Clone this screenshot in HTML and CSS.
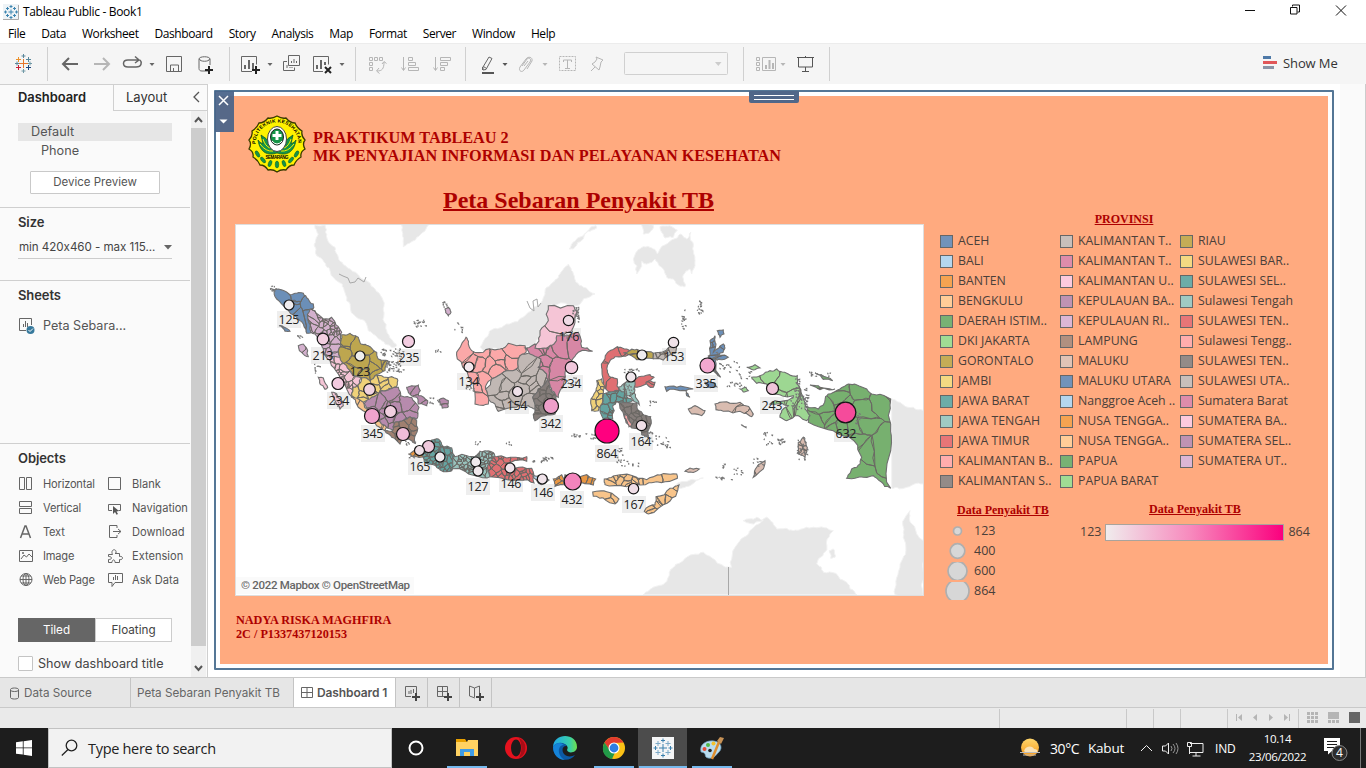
FILE: index.html
```html
<!DOCTYPE html>
<html lang="id">
<head>
<meta charset="utf-8">
<title>Tableau Public - Book1</title>
<link rel="stylesheet" href="styles.css">
</head>
<body>
<div class="app">
  <header class="titlebar">
    <svg class="app-icon" width="16" height="16" viewBox="0 0 16 16"><path fill="#eef3f6" d="M0 0h16v16H0z"/><path d="M15.500 1v14.500H0" fill="none" stroke="#aaa"/><path d="M8 5.500v5M5.500 8h5M8 1v3M6.500 2.500h3M8 12v3M6.500 13.500h3M1 8h3M2.500 6.500v3M12 8h3M13.500 6.500v3M4.500 3v3M3 4.500h3M11.500 3v3M10 4.500h3M4.500 10v3M3 11.500h3M11.500 10v3M10 11.500h3" stroke="#3d85b0" fill="none"/></svg>
    <span class="window-title">Tableau Public - Book1</span>
    <svg class="window-controls" width="124" height="23" viewBox="1242 0 124 23"><path d="M1245 10.500h10M1336 5.500l10 10m0-10l-10 10M1292.500 6.500v-1.500h7v7h-2M1290.500 7.500h6.500v6.500h-6.500z" fill="none" stroke="#111"/></svg>
  </header>
  <nav class="menubar"><span>File</span><span>Data</span><span>Worksheet</span><span>Dashboard</span><span>Story</span><span>Analysis</span><span>Map</span><span>Format</span><span>Server</span><span>Window</span><span>Help</span></nav>
  <div class="toolbar">
    <svg width="47" height="41" viewBox="0 43 47 41" class="stroke"><path stroke="#e8762c" d="M23.500 59v9M19 63.500h9"/><path stroke="#5b879b" d="M23.500 54v4M21.500 56h4M15 63.500h4M17 61.500v4"/><path stroke="#eb912c" d="M18.500 57v5M16 59.500h5"/><path stroke="#59879b" d="M28.500 57v5M26 59.500h5"/><path stroke="#c72035" d="M18.500 65v5M16 67.500h5"/><path stroke="#1f457e" d="M28.500 65v5M26 67.500h5"/><path stroke="#7199a6" d="M23.500 69v4M21.500 71h4"/><path stroke="#7099a6" d="M28 63.500h4M30 61.500v4"/></svg>
    <svg width="182" height="41" viewBox="47 43 182 41" class="stroke sep"><path stroke-width="2" d="M78 64H63m6-6l-6 6 6 6"/><path stroke="#b6b6b6" stroke-width="2" d="M94 64h15m-6-6l6 6-6 6"/><path stroke-width="1.500" d="M138 60h-10c-6 0-6 7 0 7h8c6 0 6-5 4-7M135 56.500l4 3.500-4 3"/><path class="solid" d="M149.500 63h5l-2.500 3z"/><path d="M166.500 56.500h15v15h-15zM170.500 71v-6h8v6M173.500 71v-3"/><path d="M208 71h-6c-3 0-3-2-3-3V59c0-3 11-3 11 0v6M199.500 59c0 3 10 3 10 0"/><path stroke="#222" stroke-width="2" d="M209 66v8M205 70h8"/></svg>
    <svg width="126" height="41" viewBox="229 43 126 41" class="stroke sep"><path d="M252 71.500H241.500v-15h15v8"/><path stroke-width="2" d="M245 69v-4M249 69v-9M253 69v-6"/><path stroke="#222" stroke-width="2" d="M256 66v8M252 70h8"/><path class="solid" d="M267.500 63h5l-2.500 3z"/><path d="M288.500 55.500h11v10h-11zM287 61.500h-3.500v9h11v-3M291.500 63v-2M294 63v-4M296.500 63v-2M287 68v-3M290 68v-1M292 68v-1"/><path d="M323 71.500H313.500v-15h15v8"/><path stroke-width="2" d="M317 69v-4M321 69v-9M325 65v-3"/><path stroke="#222" stroke-width="2" d="M325 67l6 6m0-6l-6 6"/><path class="solid" d="M339.500 63h5l-2.500 3z"/></svg>
    <svg width="110" height="41" viewBox="355 43 110 41" class="stroke sep dim"><path d="M369.500 57.500h3v3h-3zM374.500 57.500h3v3h-3zM379.500 57.500h3v3h-3zM369.500 62.500h3v3h-3zM369.500 67.500h3v3h-3zM377 71c5 0 7-2 7-9M379 68l-2.500 3 3 2.500M382 64l2-2.500 2.500 2"/><path d="M403.500 57v13M401.500 67.500l2 3 2-3M408.500 57.500h4v3h-4zM408.500 62.500h7v3h-7zM408.500 67.500h10v3h-10zM435.500 57v13M433.500 67.500l2 3 2-3M440.500 57.500h10v3h-10zM440.500 62.500h7v3h-7zM440.500 67.500h4v3h-4z"/></svg>
    <svg width="278" height="41" viewBox="465 43 278 41" class="stroke sep dim"><path stroke="#666" d="M489 57l3 1.500-6 11-3 .5v-3zM483.500 66.500l3 2M482.500 67v3"/><path stroke="#555" stroke-width="2" d="M482 73h12"/><path class="solid dark" d="M502.500 63h5l-2.500 3z"/><path d="M522 66l5-7c2-2 5 0 3 3l-6 8c-2 3-6 1-4-3l6-8c2-3 7-2 6 2l-5 8M524 66l4-5"/><path class="solid" d="M542.500 63h5l-2.500 3z"/><path stroke-dasharray="2 1" d="M559.500 56.500h16v14h-16z"/><path d="M563.500 62v-2h8v2M567.500 60v8M565 68.500h5"/><path d="M596 57l7 3-2 2-1 5-1 3-7-6 3-2 2-3zM595 67l-4 4"/><rect x="624.500" y="52.500" width="103" height="22" rx="1" stroke="#d0d0d0"/><path fill="#ccc" stroke="none" d="M715 62h6.500l-3.200 4z"/></svg>
    <svg width="87" height="41" viewBox="743 43 87 41" class="stroke sep dim endsep"><path d="M756.500 57.500h3v3h-3zM756.500 62.500h3v3h-3zM756.500 67.500h3v3h-3zM762.500 57.500h13v13h-13z"/><path stroke-width="2" d="M766 69v-4M769.500 69v-9M773 69v-6"/><path class="solid" d="M780.500 63h5l-2.500 3z"/><path stroke="#555" d="M797 57.500h17M798.500 57v10h14V57M805.500 67v4M802 71.500h7M805.500 56v1.500"/></svg>
    <div class="show-me"><svg width="16" height="16"><path fill="#4e79a7" d="M1 1h8v3H1z"/><path fill="#e15759" d="M1 6h14v3H1z"/><path fill="#8a94a6" d="M1 11h11v3H1z"/></svg>Show Me</div>
  </div>

  <main class="workspace">
    <aside class="sidebar">
      <div class="side-tabs"><b>Dashboard</b><span>Layout</span><svg width="18" height="26"><path d="M10 7L5 12l5 5" class="chev"/></svg></div>
      <div class="side-scroll">
        <div class="side-content">
          <section class="devices"><div class="device active">Default</div><div class="device phone">Phone</div><div class="preview">Device Preview</div></section>
          <section class="size"><h3>Size</h3><div class="select"><span>min 420x460 - max 115...</span><svg width="8" height="5"><path d="M0 0h8L4 4.500z" fill="#666"/></svg></div></section>
          <section class="sheets"><h3>Sheets</h3><div class="sheet"><svg width="17" height="17"><path d="M8 13.500H1.500v-12h12V8M5.500 10V7M7.500 10V4M9.500 10V6" class="ico"/><circle cx="12.500" cy="13" r="4" fill="#36799c"/><path d="M10.500 13l1.500 1.500 3-3" stroke="#fff" fill="none"/></svg>Peta Sebara...</div></section>
          <section class="objects"><h3>Objects</h3>
            <div class="object-grid">
              <span><svg width="16" height="16"><path class="ico" d="M1.500 1.500h5v12h-5zM8.500 1.500h5v12h-5z"/></svg>Horizontal</span><span><svg width="16" height="16"><path class="ico" d="M1.500 1.500h12v12h-12z"/></svg>Blank</span>
              <span><svg width="16" height="16"><path class="ico" d="M1.500 1.500h12v5h-12zM1.500 8.500h12v5h-12z"/></svg>Vertical</span><span><svg width="16" height="16"><path class="ico" d="M5 10.500H1.500v-6h12v6h-2"/><path fill="#555" d="M6 6l6 5-2.500.5L11 14l-1.500.8L8 12l-2 2z"/></svg>Navigation</span>
              <span><svg width="16" height="16"><path fill="none" stroke="#666" stroke-width="1.500" d="M2.500 14L7 2h1l4.500 12M4.500 10h6"/></svg>Text</span><span><svg width="16" height="16"><path class="ico" d="M10 4V1.500H2.500v12H10V11M6 7.500h8M11 5l3 2.500-3 2.500"/></svg>Download</span>
              <span><svg width="16" height="16"><path class="ico" d="M1.500 2.500h13v11h-13zM3 11l3-4 2.500 2L11 6l3 3"/><circle cx="5" cy="5" r="1" fill="#666"/></svg>Image</span><span><svg width="16" height="16"><path class="ico" d="M1.500 6.500h4C3 1 10 0 9 5l-1 .5h4.500v3c4-1 4 4 0 3v3H8c0-4-3-3-3 0H1.500v-3c4 0 4-3 0-3z"/></svg>Extension</span>
              <span><svg width="16" height="16"><path class="ico" d="M2 7.500h12M3 4h10M3 11h10M8 1.500v12"/><circle class="ico" cx="8" cy="7.500" r="6"/><ellipse class="ico" cx="8" cy="7.500" rx="3" ry="6"/></svg>Web Page</span><span><svg width="16" height="16"><path class="ico" d="M1.500 1.500h14v9H8l-3 4v-4H1.500zM6.500 8V5M8.500 8V3M10.500 8V4"/></svg>Ask Data</span>
            </div>
            <div class="toggle"><span class="on">Tiled</span><span>Floating</span></div>
            <div class="check"><i></i>Show dashboard title</div>
          </section>
        </div>
        <div class="scrollbar"><svg width="15" height="15"><path d="M4 11l3.500-4L11 11" class="arrow"/></svg><div class="thumb"></div><svg width="15" height="22"><path d="M4 11l3.500 4 3.500-4" class="arrow"/></svg></div>
      </div>
    </aside>

    <div class="canvas">
      <div class="frame">
        <div class="frame-tools"><svg width="20" height="41"><path d="M4 5l9 9m0-9l-9 9" stroke="#fff" stroke-width="1.500"/><path d="M4.500 28.500h8l-4 4z" fill="#fff"/></svg></div>
        <div class="grip"></div>
        <div class="dashboard">
          <div class="head">
            <svg width="58" height="58" viewBox="-29 -29 58 58">
              <defs><path id="arcTop" d="M-21.500 0A21.500 21.500 0 0 1 21.500 0"/></defs>
              <path fill="#fff200" stroke="#3b3b00" stroke-width="1.300" d="M0-28Q5-25 9-26Q13-21 18-21Q20-16 25-13Q24-8 28-4Q25 0 28 5Q23 8 24 13Q19 16 17 21Q12 21 9 26Q4 25 0 28Q-4 25-9 26Q-12 21-17 21Q-19 16-24 13Q-23 8-28 5Q-25 0-28-4Q-24-8-25-13Q-20-16-18-21Q-13-21-9-26Q-5-25 0-28z"/>
              <text font-family="Liberation Sans" font-weight="bold" font-size="4.900" textLength="66"><textPath href="#arcTop">POLITEKNIK KESEHATAN</textPath></text>
              <path fill="#159447" stroke="#064d20" stroke-width=".7" d="M0 9C-9 12-17 9-19-4C-17-1-15-1-14 0L-16-9C-12-6-9-5-8-1L-7 4h14L8-1C9-5 12-6 16-9L14 0C15-1 17-1 19-4C17 9 9 12 0 9z"/>
              <path stroke="#fff200" stroke-width="1" fill="none" d="M-17 0Q-11 8-4 7M17 0Q11 8 4 7M-14-5Q-12 2-7 4M14-5Q12 2 7 4"/>
              <ellipse cy="-5" rx="9.500" ry="12.500" fill="#fff" stroke="#444"/><ellipse cy="-7" rx="6.500" ry="8" fill="#159447" stroke="#222"/><path fill="#fff" d="M-1.500-13h3v3h3v3h-3v3h-3v-3h-3v-3h3z"/><path d="M-5-3Q0 3 5-3" stroke="#fff" fill="none"/>
              <text font-family="Liberation Sans" font-weight="bold" font-size="4.500" text-anchor="middle" y="14.500" textLength="23">SEMARANG</text>
              <g fill="#159447" stroke="#064d20" stroke-width=".4"><ellipse cy="20.500" rx="1.800" ry="3.500"/><ellipse cx="-7" cy="19.500" rx="1.700" ry="3.300" transform="rotate(20 -7 19.500)"/><ellipse cx="7" cy="19.500" rx="1.700" ry="3.300" transform="rotate(-20 7 19.500)"/><ellipse cx="-14" cy="16" rx="1.700" ry="3.500" transform="rotate(-40 -14 16)"/><ellipse cx="14" cy="16" rx="1.700" ry="3.500" transform="rotate(40 14 16)"/><ellipse cx="-19.500" cy="10" rx="1.700" ry="3.500" transform="rotate(-30 -19.500 10)"/><ellipse cx="19.500" cy="10" rx="1.700" ry="3.500" transform="rotate(30 19.500 10)"/></g>
            </svg>
            <h1>PRAKTIKUM TABLEAU 2<br>MK PENYAJIAN INFORMASI DAN PELAYANAN KESEHATAN</h1>
          </div>
          <div class="body">
            <div class="map-card"><h2>Peta Sebaran Penyakit TB</h2><svg id="map" width="689" height="372" viewBox="235 224 689 372"></svg></div>
            <div class="legends">
              <h4 class="prov-title">PROVINSI</h4>
              <div class="prov" id="provinces"></div>
              <div class="data-legends">
                <div class="size-legend"><h4>Data Penyakit TB</h4>
                  <div><svg width="28" height="18"><circle cx="13.500" cy="9" r="4"/></svg>123</div><div><svg width="28" height="18"><circle cx="13.500" cy="9" r="7.300"/></svg>400</div><div><svg width="28" height="18"><circle cx="13.500" cy="9" r="9.500"/></svg>600</div><div><svg width="28" height="18"><circle cx="13.500" cy="9" r="11.500"/></svg>864</div>
                </div>
                <div class="color-legend"><h4>Data Penyakit TB</h4><div><span>123</span><i></i><span>864</span></div></div>
              </div>
            </div>
          </div>
          <div class="credit">NADYA RISKA MAGHFIRA<br>2C / P1337437120153</div>
        </div>
      </div>
    </div>
    <div class="gutter"></div>
  </main>

  <div class="tabs">
    <span class="tab source"><svg width="10" height="13"><path class="ico" d="M.5 2.500v8c0 2 8 2 8 0v-8c0-2-8-2-8 0zM.5 3c0 2 8 2 8 0"/></svg>Data Source</span>
    <span class="tab sheet-tab">Peta Sebaran Penyakit TB</span>
    <span class="tab current"><svg width="12" height="12"><path class="ico" d="M.5.5h11v10H.5zM6 .5v10M.5 5.500h11"/></svg>Dashboard 1</span>
    <span class="tab add"><svg width="17" height="16"><path class="ico" d="M7 11.500H1.500v-10h11V8M5 9V6M7 9V5M9.500 8V4"/><path class="plus" d="M12 8v8M8 12h8"/></svg></span>
    <span class="tab add"><svg width="17" height="16"><path class="ico" d="M8 11.500H1.500v-10h10V8M6.500 1.500v10M1.500 6.500h10"/><path class="plus" d="M12 8v8M8 12h8"/></svg></span>
    <span class="tab add"><svg width="17" height="16"><path class="ico" d="M7 13L1.500 11V1L6.500 3l5-2v7M6.500 3v9"/><path class="plus" d="M12 8v8M8 12h8"/></svg></span>
  </div>
  <div class="status"><svg width="367" height="19" viewBox="999 709 367 19"><path stroke="#c9c9c9" d="M999.500 709v19M1126.500 709v19M1153.500 709v19M1180.500 709v19M1227.500 709v19M1298.500 709v19"/><path fill="#b5b5b5" d="M1236 714h1v7h-1zM1242 714v7l-4-3.500zM1257 714v7l-4-3.500zM1269 714v7l4-3.500zM1284 714v7l4-3.500zM1289 714h1v7h-1zM1307 712h3v3h-3zM1311 712h3v3h-3zM1315 712h3v3h-3zM1307 716h3v3h-3zM1311 716h3v3h-3zM1315 716h3v3h-3zM1307 720h3v3h-3zM1311 720h3v3h-3zM1315 720h3v3h-3zM1328 712h11v7h-11zM1328 720h3v3h-3zM1332 720h3v3h-3zM1336 720h3v3h-3z"/><path fill="#666" d="M1349 712h11v11h-11z"/></svg></div>

  <footer class="taskbar">
    <div class="start"><svg width="16" height="16"><path fill="#fff" d="M0 2.300L6.800 1.300v6.200H0zM7.600 1.200L16 0v7.500H7.600zM0 8.300h6.800v6.300L0 13.700zM7.600 8.300H16V16l-8.400-1.200z"/></svg></div>
    <div class="search"><svg width="18" height="18"><circle cx="10.500" cy="6.500" r="5.300"/><path d="M7 10.500L.8 16.500"/></svg>Type here to search</div>
    <div class="slot cortana"><svg width="18" height="18"><circle cx="9" cy="9" r="6.500" fill="none" stroke="#fff" stroke-width="2"/></svg></div>
    <div class="slot open"><svg width="24" height="20"><path fill="#e8a000" d="M1 1h9l2 3H1z"/><path fill="#ffd262" d="M1 4h11l1-2h10v16H1z"/><path fill="#3f9be5" d="M5 11h14v7h-4v-4h-6v4H5z"/></svg></div>
    <div class="slot"><svg width="24" height="24"><ellipse cx="12" cy="12" rx="11" ry="11" fill="#e5121e"/><path fill="#a80d17" d="M15 2a11 11 0 0 1 0 20q5-10 0-20z"/><ellipse cx="12" cy="12" rx="5" ry="8.500" fill="#1c1c1c"/></svg></div>
    <div class="slot"><svg width="24" height="24"><defs><linearGradient id="ed"><stop stop-color="#1fa8e8"/><stop offset=".7" stop-color="#39cfa9"/><stop offset="1" stop-color="#6fe04b"/></linearGradient></defs><path fill="url(#ed)" d="M0 11C1-4 24-3 24 11c0 6-9 7-10 3 3-5-5-8-9-5z"/><path fill="#0c59a4" d="M0 11c3-6 12-5 14-1-6-1-6 8 0 10 3 1 6 0 8-1-5 8-22 6-22-8z"/><path fill="#1583d8" d="M0 11c3-5 8-5 11-2-7 0-7 11 1 15C5 24 0 18 0 11z"/></svg></div>
    <div class="slot open"><svg width="24" height="24"><circle cx="12" cy="12" r="11" fill="#fbc116"/><path fill="#e33b2e" d="M2.500 6.500a11 11 0 0 1 19 0L12 7 8 15z"/><path fill="#229a48" d="M2.500 6.500L8 14.500l5 2L10 23C1 21-1 13 2.500 6.500z"/><circle cx="12" cy="12" r="5.500" fill="#fff"/><circle cx="12" cy="12" r="4.400" fill="#2f7de1"/></svg></div>
    <div class="slot open chosen"><svg width="22" height="22"><path fill="#f4f5f6" d="M0 0h22v22H0z"/><path stroke="#3a80ad" fill="none" d="M11 7v8M7 11h8M11 1.500v4M9 3.500h4M11 16.500v4M9 18.500h4M1.500 11h4M3.500 9v4M16.500 11h4M18.500 9v4"/><path stroke="#7ba8c6" fill="none" d="M6 4v5M3.500 6.500h5M16 4v5M13.500 6.500h5M6 13v5M3.500 15.500h5M16 13v5M13.500 15.500h5"/></svg></div>
    <div class="slot open"><svg width="26" height="24"><path fill="#b9dcef" stroke="#6c9fbe" stroke-width=".7" d="M2 16C0 8 8 4 15 5s9 7 5 11-5 7-11 6c-5-1 0-5-7-6z"/><circle cx="5.500" cy="13" r="2" fill="#e34d3a"/><circle cx="9" cy="9" r="2" fill="#51b749"/><circle cx="14.500" cy="7.500" r="2" fill="#f4c22c"/><circle cx="11" cy="14.500" r="1.800" fill="#222"/><path stroke="#df8e2e" stroke-width="2.500" d="M20 6l-7 17"/><path fill="#c79256" d="M18 5l3-4 4 1-3 6z"/></svg></div>
    <div class="tray">
      <svg class="sun" width="22" height="20"><defs><linearGradient id="sg" x2="0" y2="1"><stop stop-color="#ffd66b"/><stop offset="1" stop-color="#f79a1d"/></linearGradient></defs><circle cx="11" cy="9.500" r="9" fill="url(#sg)"/><path fill="#fae3b8" d="M5 13c2-6 9-5 10-2 5 0 4 4 1 4H7z"/><path stroke="#bbb" d="M1 14.500h20M4 17h13"/></svg>
      <span class="temp">30°C</span><span class="cond">Kabut</span>
      <svg class="tray-icons" width="64" height="18"><path d="M1 12l5.500-5.500L12 12M22.500 7v5h3l3 3V4l-3 3z"/><path stroke="#999" d="M31 7q2 2.500 0 5M33 5q4 4.500 0 9M36 4q4 5.500 0 11"/><path d="M50 4.500h13v9H50M56 14v3M52.500 17h8M47.500 3.500h4v4h-4zM49.500 8v7"/></svg>
      <span class="lang">IND</span><span class="clock">10.14<br>23/06/2022</span>
      <svg class="notes" width="26" height="26"><path fill="#fff" d="M1 3h16v13h-8l-4 3.500V16H1z"/><path stroke="#1c1c1c" d="M4 6.500h10M4 9.500h10M4 12.500h8"/><circle cx="16.500" cy="18" r="7.500" fill="#2d2d2d" stroke="#888"/><text x="16.500" y="22.300" text-anchor="middle">4</text></svg>
      <i class="peek"></i>
    </div>
  </footer>
</div>
<script src="map.js"></script>
</body>
</html>
```
FILE: styles.css
```css
*{box-sizing:border-box}
body{margin:0;background:#fff;font-family:"Open Sans","Noto Sans",sans-serif;color:#333;overflow:hidden}
h1,h2,h3,h4{margin:0}
svg{display:block;flex:none}
.app{width:1366px;height:768px;display:flex;flex-direction:column}
.titlebar{height:23px;display:flex;align-items:center;padding-left:3px;color:#000;font-size:12px}
.window-title{margin-left:4px;letter-spacing:-.33px;white-space:nowrap}
.window-controls{margin-left:auto}
.menubar{height:20px;display:flex;gap:16px;padding-left:8px;color:#000;font-size:12px;line-height:21px;letter-spacing:-.42px}
.toolbar{height:41px;background:#f5f5f5;border-top:1px solid #ececec;display:flex}
.toolbar>svg{margin-top:-1px}
.stroke{fill:none;stroke:#666;stroke-width:1}
.dim{stroke:#b6b6b6}
.solid{fill:#666;stroke:none}.dim .solid{fill:#b6b6b6}.dim .dark{fill:#555}
.sep{background:linear-gradient(#d0d0d0,#d0d0d0) 0 4px/1px 34px no-repeat}
.endsep{background:linear-gradient(#d0d0d0,#d0d0d0) 0 4px/1px 34px no-repeat,linear-gradient(#d0d0d0,#d0d0d0) 86px 4px/1px 34px no-repeat}
.show-me{margin-left:auto;width:104px;display:flex;align-items:center;gap:5px;font-size:13px;color:#333;white-space:nowrap;letter-spacing:-.1px;padding-bottom:3px}
.workspace{height:593px;display:flex}
.sidebar{width:208px;background:#fafafa;border-right:1px solid #cfcfcf;border-top:1px solid #d0d0d0;display:flex;flex-direction:column;font-family:Inter,sans-serif}
.side-tabs{height:26px;display:flex;line-height:25px}
.side-tabs b{width:113px;padding-left:18px;color:#222;font-size:12.900px;font-weight:600}
.side-tabs span{flex:1;border-left:1px solid #d0d0d0;border-bottom:1px solid #d0d0d0;padding-left:12px;font-size:13px}
.side-tabs svg{border-bottom:1px solid #d0d0d0}
.chev,.arrow{fill:none;stroke:#555;stroke-width:1.300}.arrow{stroke-width:2}
.side-scroll{flex:1;display:flex}
.side-content{width:191px}
.side-content section{border-bottom:1px solid #cfcfcf;margin-right:1px}
.side-content h3{font-size:13px;font-weight:600;line-height:16px;padding-left:18px;letter-spacing:-.1px}
.devices{height:97px;padding-top:12px;font-size:12.700px;line-height:18px;color:#555}
.device{margin-left:18px;width:154px;padding-left:13px}
.device.active{background:#e6e6e6}
.device.phone{padding:1px 0 0 23px;height:18px}
.preview{margin:12px 0 0 30px;width:130px;height:23px;border:1px solid #c9c9c9;border-radius:1px;background:#fff;text-align:center;line-height:20px;font-size:11.500px}
.size{height:73px;padding-top:6px}
.select{margin:6px 18px 0;height:23px;border-bottom:1px solid #ccc;display:flex;justify-content:space-between;align-items:center;font-size:11.600px;color:#444;padding-left:1px;letter-spacing:-.05px}
.sheets{height:163px;padding-top:6px}
.sheet{display:flex;align-items:center;gap:8px;margin:14px 0 0 18px;font-size:12.600px;color:#555}
.ico{fill:none;stroke:#666}
section.objects{height:224px;padding-top:6px;border:0;margin:0}
.object-grid{display:grid;grid-template-columns:89px 1fr;grid-auto-rows:24px;padding:6px 0 0 18px;font-size:11.100px;color:#555}
.object-grid span{display:flex;align-items:center;gap:9px;white-space:nowrap}
.object-grid span:nth-child(odd){letter-spacing:-.2px}
.toggle{display:grid;grid-template-columns:77px 77px;height:23px;margin:26px 0 0 18px;font-size:11.700px;text-align:center;line-height:22px}
.toggle span{border:1px solid #ccc;background:#fff;color:#444}
.toggle .on{background:#666;border-color:#666;color:#fff}
.check{display:flex;align-items:center;gap:5px;margin:15px 0 0 18px;font-size:12.600px;line-height:15px;color:#444;white-space:nowrap}
.check i{width:15px;height:15px;border:1px solid #c4c4c4;background:#fff;border-radius:1px}
.scrollbar{width:15px;background:#f0f0f0;display:flex;flex-direction:column}
.scrollbar>svg:first-child{height:17px}
.thumb{flex:1;background:#cdcdcd;margin-bottom:9px}
.canvas{width:1132px;padding:6px 6px 7px;background:#fff}
.frame{position:relative;height:580px;width:1120px;border:2px solid #557796;border-radius:1px;padding:4px}
.frame-tools{position:absolute;left:-1px;top:-1px;width:19px;height:41px;background:#4a6489ee}
.grip{position:absolute;left:533px;top:-1px;width:50px;height:12px;background:linear-gradient(#fff,#fff) 5px 4px/40px 1px no-repeat,linear-gradient(#fff,#fff) 5px 8px/40px 1px no-repeat,#506789;border-radius:0 0 2px 2px}
.dashboard{width:1108px;height:568px;background:#ffaa7f;padding:19px 0 0 15px;font-family:"Liberation Serif",serif;color:#ad0000}
.head{display:flex;gap:7px;height:70px;padding-left:13px}
.head h1{font-size:16.220px;line-height:18px;padding-top:14px;white-space:nowrap}
.body{display:grid;grid-template-columns:704px 1fr;height:411px}
.map-card h2{width:687px;text-align:center;font-size:24px;line-height:30px;height:39px;text-decoration:underline;text-decoration-thickness:2px}
#map{background:#fff}
.legends h4{font-size:12px;line-height:14px;text-decoration:underline}
.legends{padding-top:27px}
.prov-title{width:370px;text-align:center}
.prov{display:grid;grid-template-rows:repeat(13,20px);grid-auto-flow:column;grid-auto-columns:120px;margin-top:5px;font:12.300px/20px "Open Sans","Noto Sans",sans-serif;color:#4a403a}
.prov div{display:flex;align-items:center;gap:5px;white-space:nowrap;height:20px;padding-left:1px}
.prov i{width:13px;height:13px;border:1px solid #666}
.data-legends{display:flex;font:12.500px/20px "Open Sans",sans-serif;color:#4a403a}
.data-legends h4{font-family:"Liberation Serif",serif;color:#ad0000}
.size-legend{width:140px;padding:13px 0 0 5px}
.size-legend h4{padding-left:13px;margin-bottom:4px;line-height:13px}
.size-legend div{display:flex;align-items:center;gap:2px;height:20px}
.size-legend circle{fill:#d7d7d7;stroke:#afafaf;stroke-width:1.700}
.color-legend{padding-top:11px}
.color-legend h4{padding-left:70px}
.color-legend div{display:flex;align-items:center;gap:4px;padding:6px 0 0 1px}
.color-legend i{width:179px;height:17px;border:1px solid #a9a39c;background:linear-gradient(90deg,#f0eced,#f789bd 48%,#fb007e)}
.credit{padding:17px 0 0 1px;font-size:12.200px;font-weight:bold;line-height:14px}
.gutter{flex:1;background:#fafafa;border-right:1px solid #ccc}
.terrain{fill:#e7e7e7;stroke:#f2f2f2;stroke-width:1}
.province{stroke:#6f6f6f;stroke-width:1.100}
.district{fill:none;stroke:#6b6864;stroke-width:1}
.island{fill:#777}
.border{fill:none;stroke:#a8a8a8;stroke-width:1}
.marker{stroke:#161616;stroke-width:1.200}
.map-label{font:12.500px "Open Sans","Noto Sans",sans-serif;fill:#222;text-anchor:middle}
.label-bg{fill:#eee}
.attribution{font:500 11.500px Roboto,sans-serif;fill:#666}
.tabs{height:31px;background:#e6e6e6;border-top:1px solid #c9c9c9;border-bottom:1px solid #c9c9c9;display:flex;font:11.700px/29px Inter,sans-serif;color:#666}
.tab{border-right:1px solid #c4c4c4;display:flex;align-items:center;white-space:nowrap}
.source{width:131px;padding:1px 0 0 10px;gap:4px}
.sheet-tab{width:163px;padding:1px 0 0 6px}
.current{width:102px;padding-left:7px;gap:4px;background:#fff;font-weight:600;font-size:12px;color:#555;letter-spacing:-.1px}
.add{width:32px;padding-left:8px}
.plus{stroke:#444;stroke-width:2}
.status{height:20px;background:#eaeaea;padding-top:1px;display:flex;justify-content:flex-end}
.taskbar{height:40px;background:#1d1d1d;display:flex;color:#fff}
.start{width:48px;padding:12px 0 0 16px}
.search{width:344px;background:#f2f2f2;border:1px solid #c2c2c2;display:flex;align-items:center;gap:9px;padding-left:12px;font-size:14.500px;color:#222;letter-spacing:-.3px}
.search svg{fill:none;stroke:#222;stroke-width:1.300}
.slot{width:49px;height:40px;display:flex;align-items:center;justify-content:center}
.cortana{width:50px;padding-right:2px}
.open{background:linear-gradient(#76b9ed,#76b9ed) 50% 100%/40px 2px no-repeat}
.chosen{background:linear-gradient(#76b9ed,#76b9ed) 50% 100%/48px 2px no-repeat,#4c4c4c}
.tray{margin-left:auto;width:347px;display:flex;align-items:center;white-space:nowrap;font-size:12px}
.sun{margin-right:9px}
.temp{font-size:14px;width:38px;letter-spacing:-.4px}
.cond{font-size:13.500px;width:52px;letter-spacing:-.2px}
.tray-icons{fill:none;stroke:#eee}
.lang{margin-left:11px;width:32px;font-size:12px;letter-spacing:-.2px}
.clock{width:61px;text-align:center;line-height:18px;font-size:11.500px;letter-spacing:-.35px}
.notes{margin-left:15px}.notes text{fill:#fff;font-size:12px}
.peek{width:1px;height:40px;background:#777;margin-left:11px}
```
FILE: map.js
```javascript
// Outlines are digitised on three sheets at triple scale; each sheet has its own origin.
const sheets = { A: [235, 224], B: [440, 224], C: [660, 224] };
const NS = 'http://www.w3.org/2000/svg';
const map = document.getElementById('map');

function el(name, attrs, parent = map) {
  const node = document.createElementNS(NS, name);
  for (const k in attrs) node.setAttribute(k, attrs[k]);
  parent.appendChild(node);
  return node;
}
let seed = 11;
const rnd = () => (seed = (seed * 16807) % 2147483647) / 2147483647;
const points = (sheet, s) => s.trim().split(/\s+/).map(p => {
  const [x, y] = p.split(',').map(Number);
  return [sheets[sheet][0] + x / 3, sheets[sheet][1] + y / 3];
});
const hash = (a, b) => { const v = Math.sin(a * 12.9898 + b * 78.233) * 43758.5453; return v - Math.floor(v) - 0.5; };
// Midpoint displacement keyed on edge position, so shared borders stay matched.
function roughen(pts, depth = 2) {
  if (!depth) return pts;
  const out = [];
  pts.forEach((p, i) => {
    const q = pts[(i + 1) % pts.length], mx = (p[0] + q[0]) / 2, my = (p[1] + q[1]) / 2;
    const len = Math.hypot(p[0] - q[0], p[1] - q[1]);
    out.push(p);
    if (len > 2.5 && len < 60) out.push([mx + hash(mx, my) * len * 0.3, my + hash(my, mx) * len * 0.3]);
  });
  return roughen(out, depth - 1);
}
const toPath = p => 'M' + p.map(v => v[0].toFixed(1) + ' ' + v[1].toFixed(1)).join('L') + 'Z';
function inside(p, poly) {
  let r = false;
  for (let i = 0, j = poly.length - 1; i < poly.length; j = i++) {
    const a = poly[i], b = poly[j];
    if ((a[1] > p[1]) !== (b[1] > p[1]) && p[0] < (b[0] - a[0]) * (p[1] - a[1]) / (b[1] - a[1]) + a[0]) r = !r;
  }
  return r;
}
function cut(poly, a, b) {
  const nx = b[0] - a[0], ny = b[1] - a[1], c = nx * (a[0] + b[0]) / 2 + ny * (a[1] + b[1]) / 2;
  const side = p => nx * p[0] + ny * p[1] - c, out = [];
  poly.forEach((p, i) => {
    const q = poly[(i + 1) % poly.length], s = side(p), t = side(q);
    if (s <= 0) out.push(p);
    if (s * t < 0) out.push([p[0] + (q[0] - p[0]) * s / (s - t), p[1] + (q[1] - p[1]) * s / (s - t)]);
  });
  return out;
}
const terrain = [
  ['A', '240,3 270,3 275,40 300,70 310,100 345,135 380,165 420,195 440,220 445,260 455,320 485,365 470,370 440,350 400,320 355,270 335,230 322,180 285,140 265,110 245,95 238,60 250,30'],
  ['A', '500,3 580,3 545,40 505,68'],
  ['B', '120,370 150,320 200,300 260,270 300,240 320,190 350,165 375,130 385,120 400,150 430,190 465,210 430,225 410,245 325,245 325,290 300,335 285,368 205,362 180,378 130,382'],
  ['B', '388,75 405,52 440,25 468,5 470,12 430,45 400,75'],
  ['C', '-80,105 -72,85 -50,68 -20,75 -8,90 0,75 20,60 60,30 80,45 92,25 100,60 105,110 95,150 88,135 72,150 75,188 50,180 40,165 20,160 10,135 -5,120 -15,105 -40,120 -55,112 -70,150'],
  ['C', '0,8 35,8 52,18 40,40 15,42 5,25'], ['C', '-55,5 -20,4 -30,25 -50,30'],
  ['C', '695,525 720,535 760,550 792,560 792,780 740,790 695,793'],
  ['C', '50,780 90,768 130,762 90,785 55,795'],
  ['C', '-50,1112 -20,1090 25,1060 40,1030 70,1010 130,985 180,1020 215,1030 240,950 275,915 320,880 350,915 400,920 440,910 520,920 500,950 470,1020 490,1045 560,1075 590,1112'],
  ['C', '705,1112 720,1030 730,940 750,860 770,930 790,950 790,1112'], ['C', '250,890 290,880 310,890 280,900'], ['C', '508,980 520,975 525,1000 512,1003']
];
terrain.forEach(([s, d]) => el('path', { class: 'terrain', d: toPath(roughen(points(s, d), 3)) }));
el('path', { class: 'border', d: 'M339 274l4 2 5 2 2 5 5-1 3-4 6 4 2-5M527 301l3 7 4 3-1-10 4-2 1 8 3-4M728.500 567v28' });

const labels = [[289,320,125],[323,356,213],[360,372,123],[339,401,234],[409,358,235],[373,434,345],[420,467,165],[469,382,134],[569,337,176],[571,384,234],[517,406,154],[551,424,342],[607,454,864],[641,442,164],[674,357,153],[706,384,335],[772,406,243],[846,434,632],[478,487,127],[511,484,146],[543,493,146],[572,500,432],[634,505,167]];
labels.forEach(([x, y]) => el('rect', { class: 'label-bg', x: x - 12, y: y - 9, width: 24, height: 17 }));

const C = { blue: '#6b8fb8', light: '#b3d5ec', orange: '#e89642', peach: '#f8c48a', green: '#77b06f', mint: '#9dd792', gold: '#bda64f', yellow: '#efd179', teal: '#64a3a0', aqua: '#98c2bc', red: '#df6f72', pink: '#fba8a8', grey: '#857d7a', stone: '#c1b8b4', rose: '#d787a5', blush: '#f5c5d6', purple: '#b78bad', lilac: '#d3b0cd', brown: '#a08070', tan: '#d9bcb0' };
// sheet, colour, mean district area in px, outline
const provinces = [
  ['A', 'blue', 60, '112,195 130,195 165,212 180,208 205,208 220,225 235,240 232,262 222,270 225,300 235,325 215,328 205,300 180,275 150,250 125,225'],
  ['A', 'lilac', 24, '225,255 240,260 265,285 290,280 300,295 320,325 318,350 310,380 315,400 285,400 265,390 262,370 240,330 228,325 220,290'],
  ['A', 'blush', 24, '265,385 285,400 315,400 335,420 355,455 378,462 372,480 355,490 350,520 335,495 310,450 285,410'],
  ['A', 'gold', 100, '320,332 345,328 370,340 378,360 400,365 425,385 430,405 458,410 450,440 420,455 405,470 380,462 355,455 335,425 315,400 310,380 318,350'],
  ['A', 'yellow', 60, '380,462 405,470 420,455 440,455 470,458 487,465 484,488 462,493 440,500 410,520 385,535 350,520 355,490 372,480'],
  ['A', 'peach', 45, '350,515 385,535 400,560 430,590 455,610 450,620 425,605 395,570 370,550'],
  ['A', 'purple', 85, '410,520 440,500 465,495 490,490 497,515 530,520 552,550 545,585 525,580 500,592 480,595 475,618 455,610 430,590 400,560 388,538'],
  ['A', 'brown', 45, '480,595 500,592 525,578 545,590 543,630 540,658 530,650 515,645 500,650 495,660 470,640 450,620 475,618'],
  ['A', 'purple', 40, '515,490 530,485 550,483 556,500 550,515 578,530 575,545 550,540 545,520 520,505'],
  ['A', 'purple', 60, '612,528 625,522 640,530 640,548 622,552'], ['A', 'lilac', 60, '630,255 640,250 648,265 640,275'],
  ['A', 'blue', 90, '132,305 145,308 165,322 150,322'], ['A', 'lilac', 25, '190,365 205,360 218,380 220,398 205,390'],
  ['A', 'blush', 90, '250,460 265,462 278,490 270,496 255,480'], ['A', 'blush', 40, '290,505 305,510 325,545 315,555 300,530'],
  ['A', 'orange', 25, '520,690 545,675 568,680 568,698 535,698'],
  ['A', 'teal', 18, '568,672 590,648 610,645 625,668 650,672 660,698 657,722 650,740 620,737 595,722 568,714'],
  ['B', 'pink', 150, '78,340 85,360 95,380 130,385 180,375 205,358 255,365 258,385 240,395 235,430 200,440 155,465 140,480 137,495 145,520 145,540 105,540 100,480 85,455 68,430 50,385'],
  ['B', 'stone', 150, '240,395 265,388 290,390 303,405 295,430 320,450 325,470 315,480 295,495 278,520 285,555 265,545 230,550 175,562 165,540 145,520 137,495 155,465 200,440 235,430'],
  ['B', 'grey', 36, '325,465 328,490 345,510 355,550 345,570 315,575 285,590 285,555 278,520 295,495 315,480'],
  ['B', 'rose', 190, '255,372 285,360 325,375 345,355 350,330 415,325 425,370 458,382 415,385 395,410 375,450 370,490 355,520 335,500 325,470 320,450 295,430 303,405 270,390'],
  ['B', 'blush', 330, '325,245 400,245 412,262 405,285 400,310 385,325 350,335 342,360 320,373 285,372 300,335 325,290'],
  ['B', 'red', 60, '488,415 503,385 532,368 560,375 575,385 550,397 525,398 508,415 502,445 512,460 532,465 538,500 515,507 490,482 486,440'],
  ['B', 'gold', 60, '550,386 590,376 640,388 640,404 590,407'], ['B', 'stone', 35, '640,388 670,383 695,368 712,360 707,387 670,408 640,404'],
  ['B', 'red', 60, '576,473 605,457 630,452 642,460 610,484 580,490'], ['B', 'red', 30, '617,477 630,470 645,475 640,490'],
  ['B', 'aqua', 50, '535,490 560,473 585,473 583,507 598,542 580,528 560,515 540,507'],
  ['B', 'teal', 35, '490,510 515,503 540,498 560,518 578,530 530,533 518,545 518,585 490,585 480,550 490,530'],
  ['B', 'yellow', 35, '470,470 485,465 490,510 488,535 475,560 455,560 453,525 468,500'],
  ['B', 'grey', 32, '538,538 590,538 597,560 612,573 632,578 632,602 620,627 575,612 553,580'], ['B', 'pink', 90, '553,570 562,575 575,605 567,608 560,590'],
  ['B', 'grey', 18, '600,610 625,605 625,640 605,632'],
  ['B', 'teal', 16, '0,673 30,673 40,700 35,738 0,738'],
  ['B', 'aqua', 14, '38,700 105,698 120,682 135,680 160,686 165,700 147,720 150,758 100,754 38,734'],
  ['B', 'red', 16, '160,698 200,702 260,698 260,712 205,716 225,733 275,733 282,777 230,768 150,758 143,725'],
  ['B', 'light', 30, '278,756 305,753 327,768 305,782'], ['B', 'orange', 22, '340,765 365,752 370,782 345,787'],
  ['B', 'orange', 20, '375,752 440,752 467,765 460,783 420,777 375,784'],
  ['B', 'peach', 28, '493,765 520,756 590,760 620,767 660,753 710,750 712,763 650,773 600,783 560,788 495,782'],
  ['B', 'peach', 90, '458,804 500,803 537,825 525,840 490,822 460,817'], ['B', 'peach', 40, '613,862 645,843 648,818 690,793 717,783 707,817 670,842 625,870'],
  ['C', 'blue', 60, '145,400 150,350 165,335 168,360 160,385 190,360 195,372 175,392 205,400 165,405 182,460 165,445 150,420'], ['C', 'blue', 99, '172,320 190,318 192,330 180,340'],
  ['C', 'blue', 80, '15,488 50,490 100,495 60,500 20,502'], ['C', 'blue', 80, '78,500 90,520 80,515'], ['C', 'blue', 30, '135,475 165,478 170,488 145,490'],
  ['C', 'tan', 90, '85,555 105,545 135,560 125,575 95,570'], ['C', 'tan', 70, '165,540 200,533 240,535 280,570 275,578 240,562 190,562 168,557'],
  ['C', 'mint', 130, '275,460 300,455 330,440 350,435 385,450 412,455 412,480 425,510 435,555 450,575 440,590 405,575 380,590 360,580 365,560 385,545 350,540 330,540 345,530 400,520 400,515 345,510 320,480 290,478'],
  ['C', 'mint', 90, '240,495 258,490 265,500 250,504'], ['C', 'mint', 60, '260,430 285,422 300,432 280,438'],
  ['C', 'green', 200, '435,545 475,555 495,530 505,510 540,495 565,480 620,495 635,510 692,525 692,600 692,680 692,793 665,775 640,755 610,760 560,763 575,735 600,720 605,700 575,645 520,620 445,595 450,575'],
  ['C', 'green', 60, '465,447 500,460 518,470 490,466'], ['C', 'green', 60, '450,483 480,490 525,495 480,497'],
  ['C', 'tan', 30, '415,690 415,655 430,640 442,670 435,700'], ['C', 'tan', 40, '280,760 290,730 315,710 310,735'], ['C', 'tan', 70, '75,742 90,732 118,735 95,745']
];
provinces.forEach(([s, color, size, d], n) => {
  const outline = roughen(points(s, d)), path = toPath(outline);
  const xs = outline.map(p => p[0]), ys = outline.map(p => p[1]);
  const x0 = Math.min(...xs), x1 = Math.max(...xs), y0 = Math.min(...ys), y1 = Math.max(...ys);
  el('path', { class: 'province', fill: C[color], d: path });
  el('path', { d: path }, el('clipPath', { id: 'area' + n }));
  const seeds = [], area = (x1 - x0) * (y1 - y0);
  for (let i = 0, tries = Math.round(area / size); i < tries; i++) {
    const p = [x0 + rnd() * (x1 - x0), y0 + rnd() * (y1 - y0)];
    if (inside(p, outline)) seeds.push(p);
  }
  let lines = '';
  if (seeds.length > 1) seeds.forEach(a => {
    let cell = [[x0 - 2, y0 - 2], [x1 + 2, y0 - 2], [x1 + 2, y1 + 2], [x0 - 2, y1 + 2]];
    seeds.forEach(b => { if (a !== b) cell = cut(cell, a, b); });
    if (cell.length > 2) lines += toPath(roughen(cell, 2));
  });
  el('path', { class: 'district', d: lines, 'clip-path': `url(#area${n})` });
});
// Small island clusters: x, y, width, height, count
[[269,284,7,6,9],[297,333,6,5,6],[314,363,6,10,9],[332,392,8,14,8],[380,348,22,8,30],[386,358,8,14,22],[395,356,8,16,18],[413,319,12,7,16],[442,301,6,6,7],[453,322,9,10,8],[435,348,5,5,5],[429,397,12,8,10],[572,307,6,15,30],[560,330,18,8,14],[566,377,10,8,8],[623,368,15,4,14],[649,400,6,5,6],[655,435,12,10,12],[571,433,24,5,16],[615,446,8,20,14],[624,460,14,6,8],[475,441,5,4,5],[506,441,5,4,4],[542,456,10,4,14],[531,460,12,2,7],[642,431,10,10,14],[665,440,5,8,5],[680,308,5,20,12],[697,300,5,13,18],[718,360,22,12,14],[736,370,14,8,9],[726,380,20,6,12],[740,424,5,5,6],[763,432,10,12,14],[777,438,7,6,16],[797,437,9,22,26],[713,476,18,3,10],[733,466,10,8,8],[790,395,18,14,26],[808,371,22,5,16],[794,378,5,20,20],[800,385,8,18,18],[836,410,20,14,15],[850,410,12,12,14],[720,463,5,5,5],[752,457,12,8,10],[465,385,8,6,8],[622,384,12,10,14],[405,440,10,4,8],[408,454,8,3,8],[714,352,6,5,6],[706,355,12,6,8]].forEach(([x, y, w, h, n]) => {
  let d = '';
  for (let i = 0; i < n; i++) d += `M${(x + rnd() * w).toFixed(1)} ${(y + rnd() * h).toFixed(1)}l${(0.8 + rnd() * 1.8).toFixed(1)} ${(rnd() - .5).toFixed(1)} ${(rnd() - .5).toFixed(1)} 1.600-1.400-.3z`;
  el('path', { class: 'island', d });
});

labels.forEach(([x, y, v]) => { el('text', { class: 'map-label', x, y: y + 4, textLength: 21 }).textContent = v; });

[[289,305,5,'#f0ecee'],[323,339,5.800,'#f2cfe0'],[360,356,5,'#eeeeec'],[338,383.500,6,'#f3cbe0'],[408.500,341.500,6,'#f3cde1'],[369.500,389.500,5.800,'#f0d2e0'],[390.500,411.500,6,'#f1cfdf'],[372,416,7.500,'#f0a3cd'],[403,434,6.500,'#efbdd8'],[428.500,446.500,6,'#efc9dc'],[419.500,450.500,5,'#efdfe7'],[440,457,5,'#efe9ec'],[469,367,5,'#f2e8ed'],[568.500,320.500,5.200,'#efdae5'],[571.500,367.500,6.200,'#f0c8dc'],[517.500,391.500,5,'#efe1e9'],[551,406,7.500,'#ee9fca'],[607,431,12,'#ff007f'],[641.500,425.500,5.200,'#efdfe7'],[631,377,5,'#efe6eb'],[642,355,5,'#efecee'],[673.500,342.500,5.200,'#f0e2e9'],[707.500,365.500,7.500,'#f2a8cf'],[772.500,388.500,6,'#efc4da'],[845.500,412.500,10.300,'#f54b9b'],[475.800,462,5,'#efeaed'],[478,471,5,'#f0e9ec'],[510,468,5,'#f0e3ea'],[542.300,479,5,'#f0e3ea'],[572.700,481.500,8.500,'#f384bc'],[633.500,488.700,5.200,'#efdde6']].forEach(([cx, cy, r, fill]) => el('circle', { class: 'marker', cx, cy, r, fill }));
el('rect', { x: 236, y: 577, width: 178, height: 17, fill: '#fafafa' });
el('text', { class: 'attribution', x: 241, y: 589, textLength: 169 }).textContent = '© 2022 Mapbox © OpenStreetMap';
el('rect', { x: 235.5, y: 224.5, width: 688, height: 371, fill: 'none', stroke: '#dedede' });

const swatch = ['#7293ba', '#b4d6ee', '#f5a351', '#ffcd98', '#78b274', '#a0dc94', '#c4ac56', '#f4d982', '#6daca8', '#9fcac3', '#e77577', '#ffadad', '#938b88', '#c8bfbb', '#de8cab', '#fccade', '#bf93b3', '#dcb6d5', '#b19080', '#e0c3b6'];
const names = ['ACEH', 'BALI', 'BANTEN', 'BENGKULU', 'DAERAH ISTIM..', 'DKI JAKARTA', 'GORONTALO', 'JAMBI', 'JAWA BARAT', 'JAWA TENGAH', 'JAWA TIMUR', 'KALIMANTAN B..', 'KALIMANTAN S..', 'KALIMANTAN T..', 'KALIMANTAN T..', 'KALIMANTAN U..', 'KEPULAUAN BA..', 'KEPULAUAN RI..', 'LAMPUNG', 'MALUKU', 'MALUKU UTARA', 'Nanggroe Aceh ..', 'NUSA TENGGA..', 'NUSA TENGGA..', 'PAPUA', 'PAPUA BARAT', 'RIAU', 'SULAWESI BAR..', 'SULAWESI SEL..', 'Sulawesi Tengah', 'SULAWESI TEN..', 'Sulawesi Tengg..', 'SULAWESI TEN..', 'SULAWESI UTA..', 'Sumatera Barat', 'SUMATERA BA..', 'SUMATERA SEL..', 'SUMATERA UT..'];
// The palette repeats after its last colour.
document.getElementById('provinces').innerHTML = names.map((n, i) => `<div><i style="background:${swatch[i % swatch.length]}"></i>${n}</div>`).join('');
```
